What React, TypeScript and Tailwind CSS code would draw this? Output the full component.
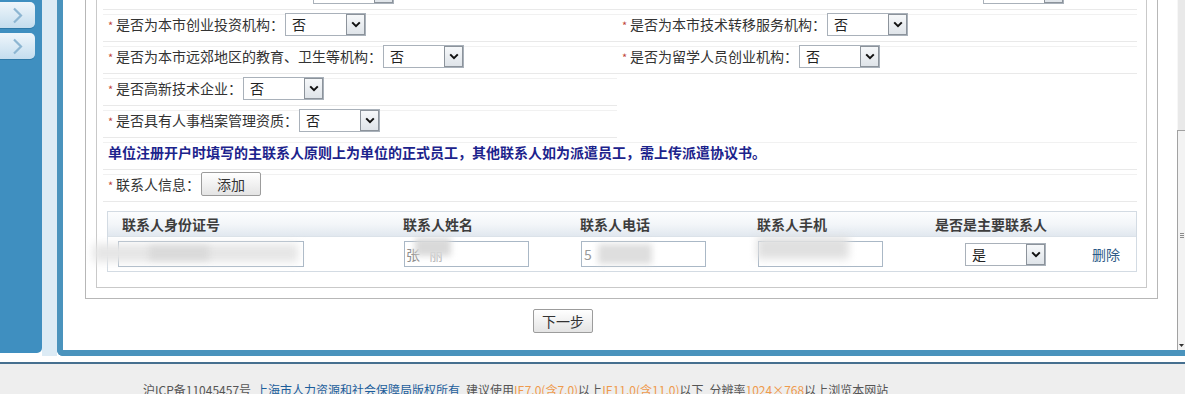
import React from "react";

function Star() {
  return (
    <span className="inline-block w-[8px] text-[11px] leading-[14px] text-[#c0453a] relative top-[1px]">*</span>
  );
}

function Select({ value, className = "" }: { value: string; className?: string }) {
  return (
    <div className={`flex h-[23px] w-[81px] shrink-0 border border-[#a9b1ba] bg-white ${className}`}>
      <div className="flex-1 pl-[6px] text-[14px] leading-[21px] text-[#222]">{value}</div>
      <div className="flex w-[19px] items-center justify-center border border-[#8c939b] bg-gradient-to-b from-[#f6f8fa] to-[#dfe4e9]">
        <svg width="10" height="7" viewBox="0 0 10 7">
          <path d="M1.2 1.4 L5 5.2 L8.8 1.4" stroke="#111" strokeWidth="2" fill="none" />
        </svg>
      </div>
    </div>
  );
}

const cellLine =
  "border-b border-[#e9e9e9] bg-[linear-gradient(to_bottom,transparent_4px,#f1f1f1_4px,#f1f1f1_5px,transparent_5px)]";

function Field({ label, value }: { label: string; value: string }) {
  return (
    <div className={`flex h-[32px] items-center pl-[5px] pb-[3px] ${cellLine}`}>
      <Star />
      <span className="text-[14px] leading-[16px] text-[#333] whitespace-nowrap">{label}：</span>
      <Select value={value} className="ml-[1px]" />
    </div>
  );
}

function ScrolledField({ offset }: { offset: string }) {
  return (
    <div className={`flex h-[32px] items-center pb-[3px] ${cellLine}`}>
      <div className={offset} />
      <Select value="否" />
    </div>
  );
}

function Btn({ children }: { children: React.ReactNode }) {
  return (
    <div className="flex h-[24px] w-[60px] items-center justify-center rounded-[2px] border border-[#9c9c9c] bg-gradient-to-b from-[#ffffff] to-[#e4e4e4] text-[14px] leading-[16px] text-[#333]">
      {children}
    </div>
  );
}

function SideBtn() {
  return (
    <div className="flex h-[26px] w-[35px] items-center justify-center rounded-r-[5px] bg-gradient-to-b from-[#eff6fb] to-[#c4ddee] shadow-[0_1px_0_#2f7aa8]">
      <svg width="11" height="17" viewBox="0 0 11 17">
        <path d="M2 1.5 L9 8.5 L2 15.5" stroke="#8db6d2" strokeWidth="2.2" fill="none" />
      </svg>
    </div>
  );
}

function Scrollbar() {
  return (
    <div className="flex w-[8px] shrink-0 flex-col">
      <div className="h-[130px] border-l border-[#f7f7f7] bg-[#e9e9e9]" />
      <div className="flex flex-1 items-center justify-center border-l border-t border-[#a2a2a2] bg-[#f3f3f3]">
        <div className="flex w-[4px] flex-col gap-[1px]">
          <div className="h-px bg-[#8a8a8a]" />
          <div className="h-px bg-[#8a8a8a]" />
          <div className="h-px bg-[#8a8a8a]" />
        </div>
      </div>
      <div className="flex h-[10px] items-center justify-center border-l border-[#a2a2a2] bg-[#f3f3f3]">
        <svg width="5" height="3" viewBox="0 0 5 3">
          <path d="M0 0 L5 0 L2.5 3 Z" fill="#333" />
        </svg>
      </div>
    </div>
  );
}

const cols = "grid grid-cols-[289px_177px_177px_177px_150px_1fr]";

export default function App() {
  return (
    <div className="flex h-[394px] w-[1185px] flex-col overflow-hidden bg-white font-['Noto_Sans_CJK_SC',sans-serif] text-[#333]">
      <div className="flex h-[362px] shrink-0">
        <aside className="flex h-[353px] w-[42px] shrink-0 flex-col gap-[5px] rounded-br-[5px] bg-[#3f8fc0] pt-[2px]">
          <SideBtn />
          <SideBtn />
        </aside>
        <div className="h-[356px] w-[15px] shrink-0 bg-[#dcebf5]" />
        <main className="flex h-[356px] flex-1 overflow-hidden rounded-bl-[6px] border-b-[6px] border-l-[6px] border-[#4a93bd] bg-white">
          <div className="flex-1 overflow-hidden">
            <div className="-mt-[40px] ml-[22px] w-[1073px] border border-[#b7b7b7] px-[10px] pb-[10px] pt-[10px]">
              <div className="border border-[#c9c9c9] pb-[15px] pl-[6px] pr-[9px] pt-[6px]">
                <div className="grid grid-cols-[514px_1fr]">
                  <ScrolledField offset="w-[210px]" />
                  <ScrolledField offset="w-[366px]" />
                  <Field label="是否为本市创业投资机构" value="否" />
                  <Field label="是否为本市技术转移服务机构" value="否" />
                  <Field label="是否为本市远郊地区的教育、卫生等机构" value="否" />
                  <Field label="是否为留学人员创业机构" value="否" />
                  <Field label="是否高新技术企业" value="否" />
                  <div className="h-[32px]" />
                  <Field label="是否具有人事档案管理资质" value="否" />
                  <div className="h-[32px]" />
                </div>
                <div className={`flex h-[32px] items-center pl-[5px] pb-[3px] ${cellLine}`}>
                  <span className="text-[14px] font-bold leading-[16px] text-[#1c238c] whitespace-nowrap">
                    单位注册开户时填写的主联系人原则上为单位的正式员工，其他联系人如为派遣员工，需上传派遣协议书。
                  </span>
                </div>
                <div className={`flex h-[32px] items-center pl-[5px] pb-[3px] ${cellLine}`}>
                  <Star />
                  <span className="text-[14px] leading-[16px] text-[#333]">联系人信息：</span>
                  <div className="ml-[1px]">
                    <Btn>添加</Btn>
                  </div>
                </div>

                <div className="ml-[4px] mt-[9px] border border-[#d3dbe3]">
                  <div className={`${cols} h-[25px] items-center border-b border-[#dbe2e9] bg-gradient-to-b from-[#fcfdfe] via-[#f3f6f9] to-[#e1e8ef] text-[14px] font-bold leading-[16px] text-[#3d3d3d]`}>
                    <div className="pl-[14px]">联系人身份证号</div>
                    <div className="pl-[6px]">联系人姓名</div>
                    <div className="pl-[6px]">联系人电话</div>
                    <div className="pl-[6px]">联系人手机</div>
                    <div className="pl-[7px] whitespace-nowrap">是否是主要联系人</div>
                    <div />
                  </div>
                  <div className={`${cols} h-[34px] items-center`}>
                    <div className="relative ml-[10px] h-[26px] w-[186px] border border-[#aab8c6] bg-white">
                      <div className="absolute -left-[26px] top-[2px] h-[18px] w-[205px] bg-[#e6e6e6] blur-[4px]" />
                      <div className="absolute left-[30px] top-[4px] h-[14px] w-[60px] bg-[#dadada] blur-[3px]" />
                    </div>
                    <div className="relative ml-[7px] h-[26px] w-[125px] border border-[#aab8c6] bg-white">
                      <span className="absolute left-[1px] top-[4px] text-[14px] leading-[16px] text-[#8c8c8c]">张</span>
                      <span className="absolute left-[24px] top-[4px] text-[14px] leading-[16px] text-[#b8b8b8]">丽</span>
                      <div className="absolute left-[10px] -top-[4px] h-[18px] w-[36px] bg-[#d9d9d9] blur-[3px]" />
                    </div>
                    <div className="relative ml-[7px] h-[26px] w-[125px] border border-[#aab8c6] bg-white">
                      <span className="absolute left-[2px] top-[4px] text-[14px] leading-[16px] text-[#9a9a9a]">5</span>
                      <div className="absolute left-[16px] top-[2px] h-[20px] w-[54px] bg-[#dedede] blur-[3px]" />
                    </div>
                    <div className="relative ml-[7px] h-[26px] w-[125px] border border-[#aab8c6] bg-white">
                      <div className="absolute -left-[2px] -top-[5px] h-[22px] w-[92px] bg-[#e0e0e0] blur-[4px]" />
                    </div>
                    <div className="pl-[37px]">
                      <Select value="是" />
                    </div>
                    <div className="pl-[14px] text-[14px] leading-[16px] text-[#2d5a87]">删除</div>
                  </div>
                </div>
              </div>
            </div>
            <div className="ml-[470px] mt-[10px]">
              <Btn>下一步</Btn>
            </div>
          </div>
          <Scrollbar />
        </main>
      </div>
      <div className="h-[2px] shrink-0 bg-[#466f8f]" />
      <footer className="flex-1 whitespace-nowrap bg-[#eeeeee] pl-[143px] pt-[18px] text-[12px] leading-[16px] text-[#555]">
        <span>沪ICP备11045457号</span>
        <span className="ml-[5px] text-[#1b5d9b]">上海市人力资源和社会保障局版权所有</span>
        <span className="ml-[6px]">建议使用</span>
        <span className="text-[#ef9a4c]">IE7.0(含7.0)</span>
        <span>以上</span>
        <span className="text-[#ef9a4c]">IE11.0(含11.0)</span>
        <span>以下</span>
        <span className="ml-[6px]">分辨率</span>
        <span className="text-[#ef9a4c]">1024×768</span>
        <span>以上浏览本网站</span>
      </footer>
    </div>
  );
}
